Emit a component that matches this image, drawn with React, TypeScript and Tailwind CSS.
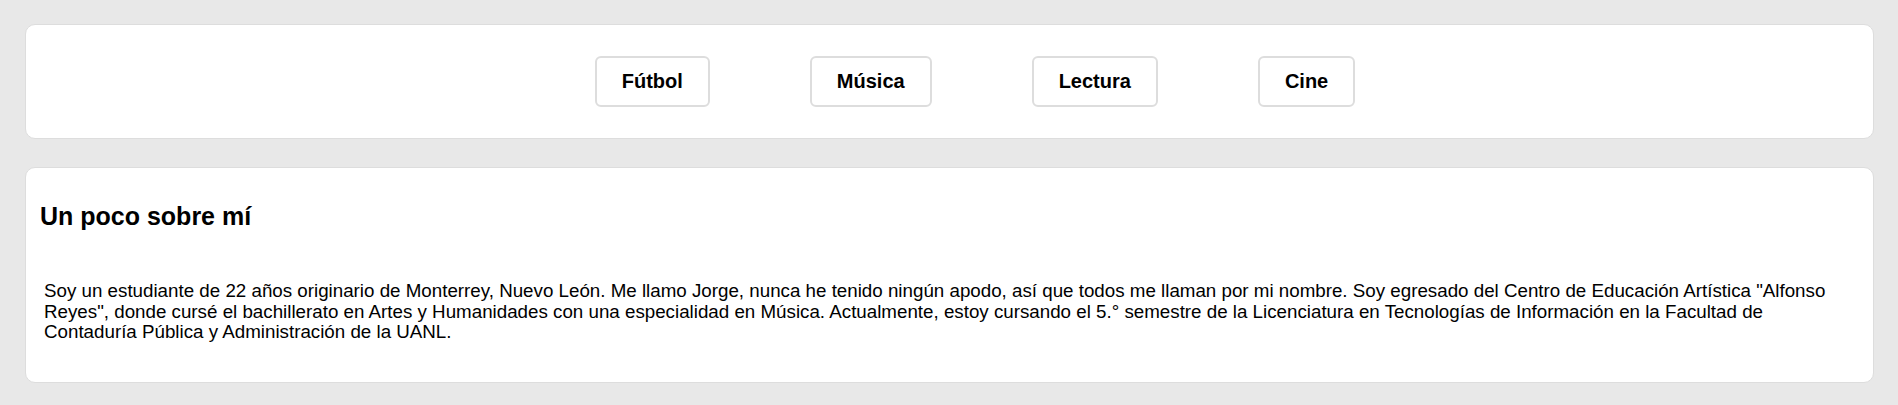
const hobbies = ['Fútbol', 'Música', 'Lectura', 'Cine'];

export default function App() {
  return (
    <div className="min-h-[405px] bg-[#e8e8e8] pt-[24px] pb-[25px] pl-[25px] pr-[24px] font-['Liberation_Sans',Arial,sans-serif] text-black">
      {/* Hobbies nav */}
      <div className="bg-white border border-[#dddddd] rounded-[10px] pt-[31px] pb-[31px]">
        <div className="flex justify-center gap-[100px] pl-[51px]">
          {hobbies.map((h) => (
            <button
              key={h}
              className="bg-white border-2 border-[#dddddd] rounded-[6px] px-[25px] py-[12px] text-[20px] leading-[normal] font-bold"
            >
              {h}
            </button>
          ))}
        </div>
      </div>

      {/* About */}
      <div className="mt-[28px] bg-white border border-[#dddddd] rounded-[10px] pt-[34px] pb-[39px]">
        <h2 className="pl-[14px] text-[25px] leading-[normal] font-bold">Un poco sobre mí</h2>
        <p className="mt-[50px] ml-[18px] mr-[40px] text-[18.75px] leading-[20.7px]">
          Soy un estudiante de 22 años originario de Monterrey, Nuevo León. Me llamo Jorge, nunca he tenido ningún apodo, así que todos me llaman por mi nombre. Soy egresado del Centro de Educación Artística "Alfonso Reyes", donde cursé el bachillerato en Artes y Humanidades con una especialidad en Música. Actualmente, estoy cursando el 5.° semestre de la Licenciatura en Tecnologías de Información en la Facultad de Contaduría Pública y Administración de la UANL.
        </p>
      </div>
    </div>
  );
}
